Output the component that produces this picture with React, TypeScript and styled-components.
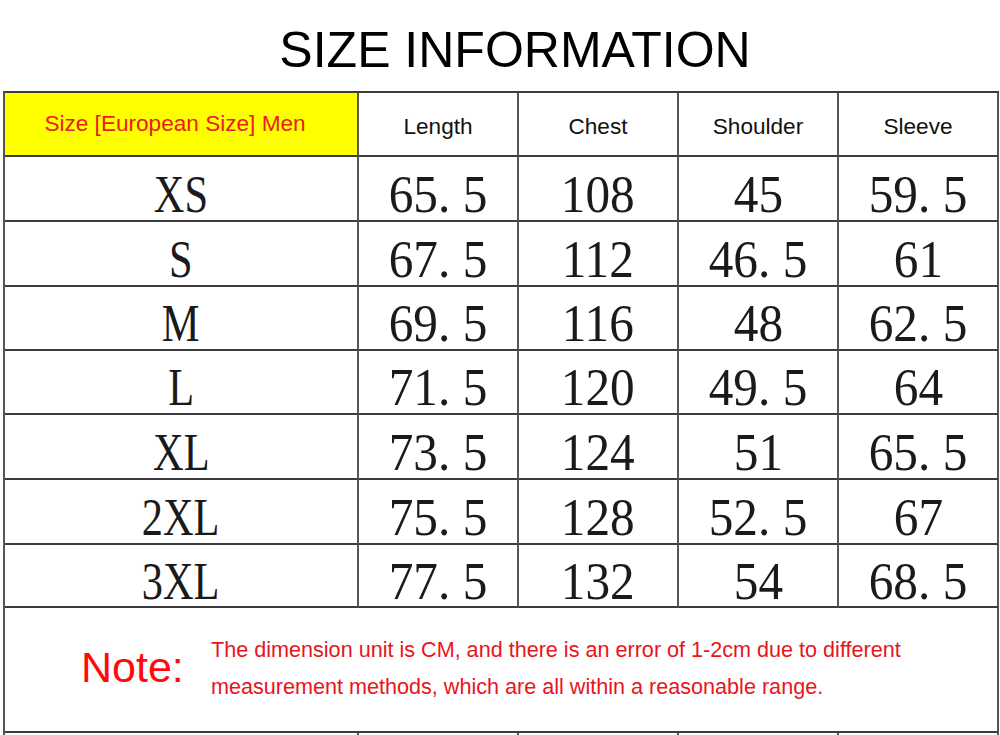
import React from "react";
import styled, { createGlobalStyle } from "styled-components";

const GlobalStyle = createGlobalStyle`
  html, body {
    margin: 0;
    padding: 0;
    background: #fff;
    overflow: hidden;
  }
  body {
    font-family: "Liberation Sans", Arial, sans-serif;
  }
`;

const Page = styled.div`
  width: 1000px;
  height: 735px;
  overflow: hidden;
  padding-left: 3px;
  box-sizing: border-box;
`;

const Title = styled.h1`
  margin: 0;
  height: 91px;
  padding-top: 25px;
  padding-left: 30px;
  box-sizing: border-box;
  font-size: 50px;
  line-height: 51px;
  font-weight: 400;
  text-align: center;
  color: #000;
  width: 994px;
`;

const Grid = styled.div`
  display: grid;
  grid-template-columns: 354px 160px 160px 160px 160px;
  border-top: 2px solid #3c3c3c;
  border-left: 2px solid #555;
  width: 996px;
  box-sizing: border-box;
`;

const Cell = styled.div<{ $h: number; $yellow?: boolean }>`
  height: ${(p) => p.$h}px;
  box-sizing: border-box;
  border-right: 2px solid #555;
  border-bottom: 2px solid #3c3c3c;
  background: ${(p) => (p.$yellow ? "#ffff00" : "#fff")};
  display: flex;
  align-items: center;
  justify-content: center;
`;

const HeadText = styled.span<{ $red?: boolean }>`
  font-family: "Liberation Sans", Arial, sans-serif;
  font-size: 22.6px;
  color: ${(p) => (p.$red ? "#e8211b" : "#111")};
  padding-top: ${(p) => (p.$red ? "0" : "5px")};
  padding-right: ${(p) => (p.$red ? "12px" : "0")};
`;

const Value = styled.span<{ $label?: boolean }>`
  font-family: "Liberation Serif", "Times New Roman", serif;
  font-size: 53px;
  line-height: 50px;
  color: #1a1a1a;
  padding-top: 10px;
  white-space: pre;
  display: inline-block;
  transform: scaleX(${(p) => (p.$label ? 0.8 : 0.93)});
`;

const NoteRow = styled.div`
  grid-column: 1 / -1;
  height: 125px;
  box-sizing: border-box;
  border-right: 2px solid #555;
  border-bottom: 2px solid #3c3c3c;
  display: flex;
  align-items: flex-start;
  padding-left: 76px;
  padding-top: 28px;
`;

const NoteLabel = styled.div`
  font-family: "Liberation Sans", Arial, sans-serif;
  font-size: 43px;
  line-height: 43px;
  color: #ff0a0a;
  margin-top: 10px;
  width: 130px;
  flex: none;
`;

const NoteText = styled.div`
  font-family: "Liberation Sans", Arial, sans-serif;
  font-size: 21.6px;
  line-height: 37px;
  color: #e8141c;
  margin-top: -5px;
  white-space: nowrap;
`;

const headers = ["Length", "Chest", "Shoulder", "Sleeve"];

const rows: [string, string, string, string, string][] = [
  ["XS", "65. 5", "108", "45", "59. 5"],
  ["S", "67. 5", "112", "46. 5", "61"],
  ["M", "69. 5", "116", "48", "62. 5"],
  ["L", "71. 5", "120", "49. 5", "64"],
  ["XL", "73. 5", "124", "51", "65. 5"],
  ["2XL", "75. 5", "128", "52. 5", "67"],
  ["3XL", "77. 5", "132", "54", "68. 5"],
];

const rowHeights = [65, 65, 64, 64, 65, 65, 63];

export default function App() {
  return (
    <Page>
      <GlobalStyle />
      <Title>SIZE INFORMATION</Title>
      <Grid>
        <Cell $h={64} $yellow>
          <HeadText $red>Size [European Size] Men</HeadText>
        </Cell>
        {headers.map((h) => (
          <Cell key={h} $h={64}>
            <HeadText>{h}</HeadText>
          </Cell>
        ))}
        {rows.map((r, i) =>
          r.map((v, j) => (
            <Cell key={`${i}-${j}`} $h={rowHeights[i]}>
              <Value $label={j === 0}>{v}</Value>
            </Cell>
          ))
        )}
        <NoteRow>
          <NoteLabel>Note:</NoteLabel>
          <NoteText>
            The dimension unit is CM, and there is an error of 1-2cm due to different
            <br />
            measurement methods, which are all within a reasonable range.
          </NoteText>
        </NoteRow>
        {[0, 1, 2, 3, 4].map((k) => (
          <Cell key={`tail-${k}`} $h={60} />
        ))}
      </Grid>
    </Page>
  );
}
